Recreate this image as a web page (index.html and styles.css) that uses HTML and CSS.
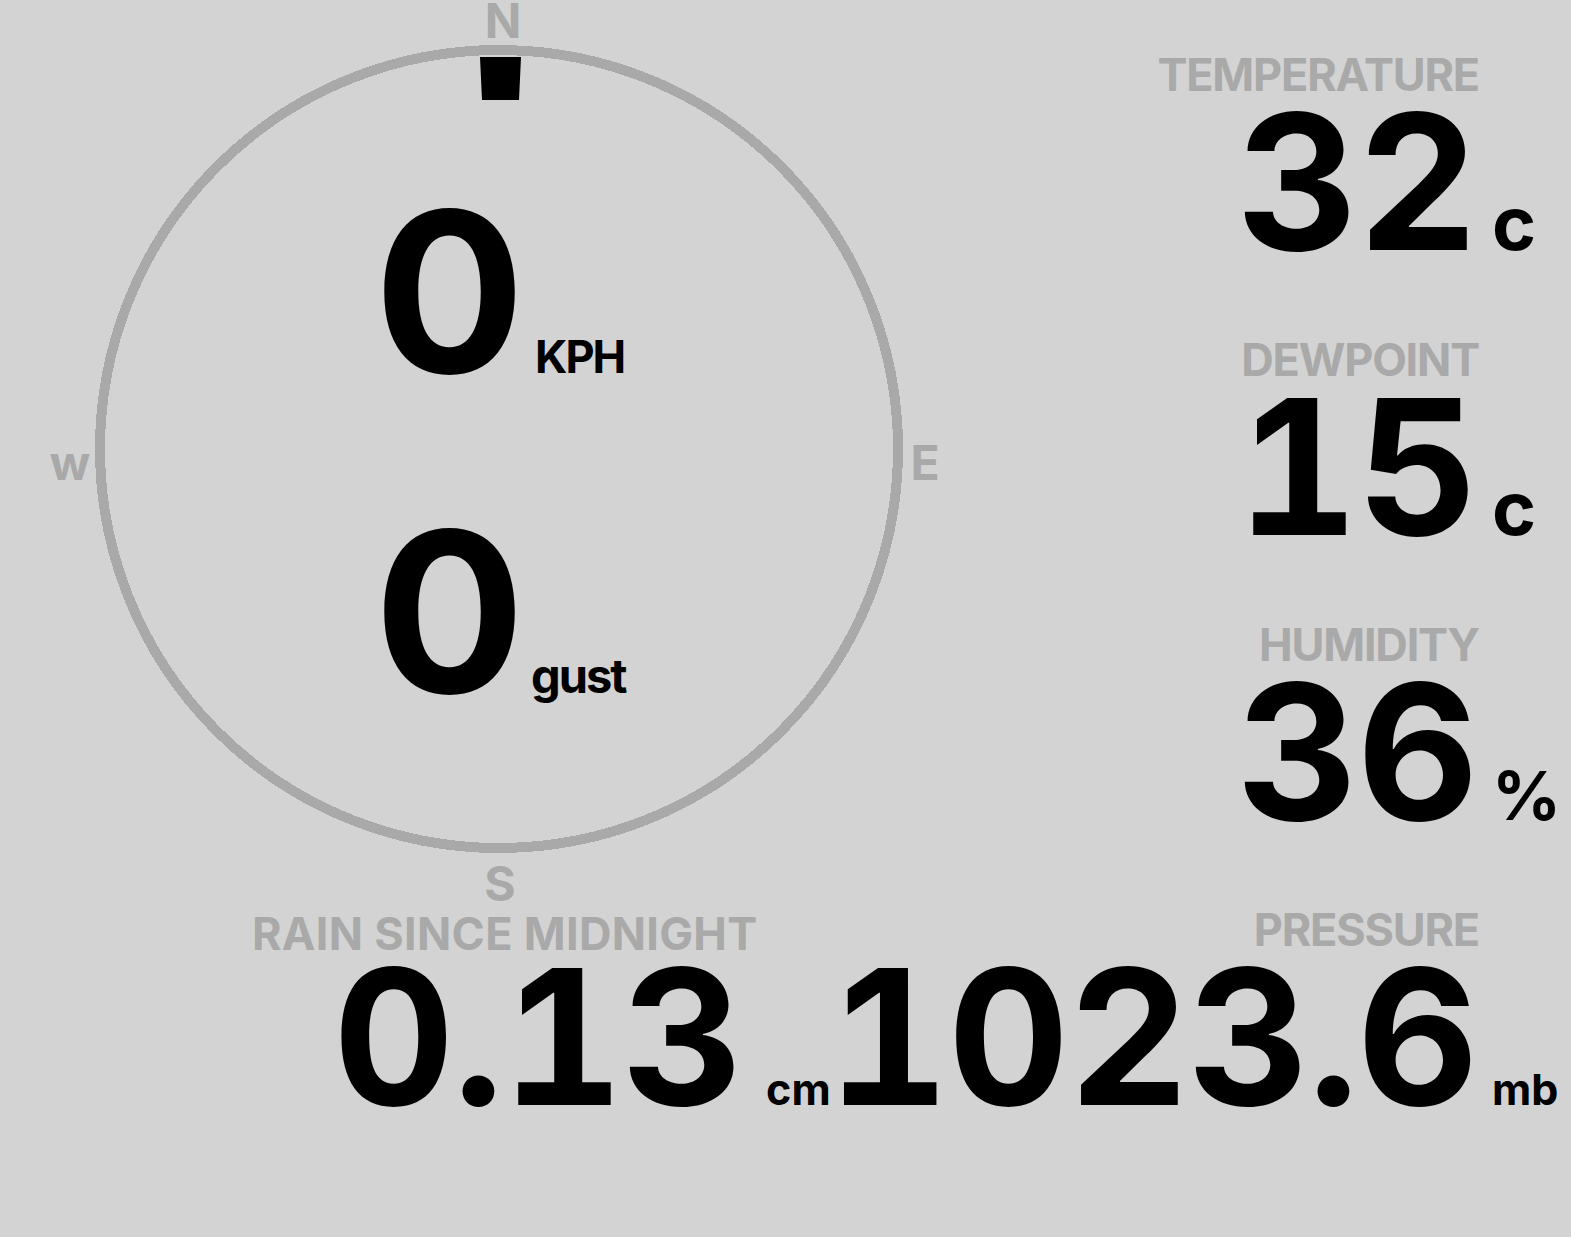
FILE: index.html
```html
<!DOCTYPE html>
<html lang="en">
<head>
  <meta charset="UTF-8">
  <title>Weather Station</title>
  <link rel="stylesheet" href="styles.css">
</head>
<body>

<div class="board">

  <div class="top">
    <!-- Kompas angin -->
    <div class="compass">
      <svg class="dial" width="1000" height="905" viewBox="0 0 1000 905">
        <circle cx="499" cy="449" r="399" fill="none" stroke="#a9a9a9" stroke-width="10" shape-rendering="crispEdges"/>
        <polygon points="480,57 521,57 519,100 482,100" fill="#000"/>
        <text class="point" x="503" y="38">N</text>
        <text class="point" x="500" y="901">S</text>
        <text class="point" x="70" y="480">w</text>
        <text class="point" x="925" y="480">E</text>
      </svg>
      <div class="wind">
        <div class="wind-row"><span class="wind-num">0</span><span class="wind-unit">KPH</span></div>
        <div class="wind-row"><span class="wind-num">0</span><span class="wind-unit gust">gust</span></div>
      </div>
    </div>

    <div class="stats">
      <div class="stat">
        <div class="label">TEMPERATURE</div>
        <div class="reading"><span class="num">32</span><span class="unit big">c</span></div>
      </div>
      <div class="stat">
        <div class="label">DEWPOINT</div>
        <div class="reading"><span class="num">15</span><span class="unit big">c</span></div>
      </div>
      <div class="stat">
        <div class="label">HUMIDITY</div>
        <div class="reading"><span class="num">36</span><span class="unit pct">%</span></div>
      </div>
    </div>
  </div>

  <div class="bottom">
    <div class="rain">
      <div class="label">RAIN SINCE MIDNIGHT</div>
      <div class="reading"><span class="num">0.13</span><span class="unit">cm</span></div>
    </div>
    <div class="stat pressure">
      <div class="label">PRESSURE</div>
      <div class="reading"><span class="num">1023.6</span><span class="unit">mb</span></div>
    </div>
  </div>

</div>

</body>
</html>
```

FILE: styles.css
```css
body {
  margin: 0;
  padding: 0;
  background: #d3d3d3;
  font-family: Inter, "Noto Sans", sans-serif;
  font-weight: 700;
  color: #000;
  overflow: hidden;
}

.board {
  width: 1571px;
}

.top {
  display: flex;
  height: 905px;
}

.bottom {
  display: flex;
}

/* Kompas */
.compass {
  display: grid;
  width: 1000px;
}

.compass > * {
  grid-area: 1 / 1;
}

.dial {
  overflow: visible;
}

.point {
  font-family: Inter, sans-serif;
  font-weight: 700;
  font-size: 48px;
  fill: #a9a9a9;
  text-anchor: middle;
}

.wind {
  padding: 132px 0 0 374px;
}

.wind-row {
  display: flex;
  align-items: baseline;
}

.wind-num {
  font-size: 224px;
  line-height: 320px;
}

.wind-unit {
  font-size: 45px;
  letter-spacing: -2px;
  margin-left: 10px;
}

.wind-unit.gust {
  font-size: 47px;
  margin-left: 6px;
}

/* Angka di kanan */
.stats {
  flex: 1;
  padding-top: 50px;
}

.stat {
  display: flex;
  flex-direction: column;
  align-items: flex-end;
  height: 214px;
  margin-bottom: 71px;
}

.label {
  font-size: 45px;
  line-height: 50px;
  letter-spacing: -1.2px;
  color: #a9a9a9;
  white-space: nowrap;
}

.stat .label {
  margin-right: 92px;
}

.reading {
  display: flex;
  align-items: baseline;
  white-space: nowrap;
}

.num {
  font-size: 188px;
  line-height: 164px;
  letter-spacing: -1.5px;
  font-variant-numeric: tabular-nums;
}

.unit {
  font-size: 43px;
  margin-left: 15px;
}

.stat .unit {
  width: 79px;
}

.unit.big {
  font-size: 75px;
}

.unit.pct {
  font-size: 68px;
}

.rain {
  width: 820px;
  flex-shrink: 0;
}

.rain .label {
  padding: 4px 0 0 252px;
  line-height: 50px;
  letter-spacing: 0.3px;
}

.rain .reading {
  padding-left: 333px;
  margin-top: -4px;
}

.rain .unit {
  margin-left: 24px;
}

.pressure {
  flex: 1;
  margin-bottom: 0;
}
```
